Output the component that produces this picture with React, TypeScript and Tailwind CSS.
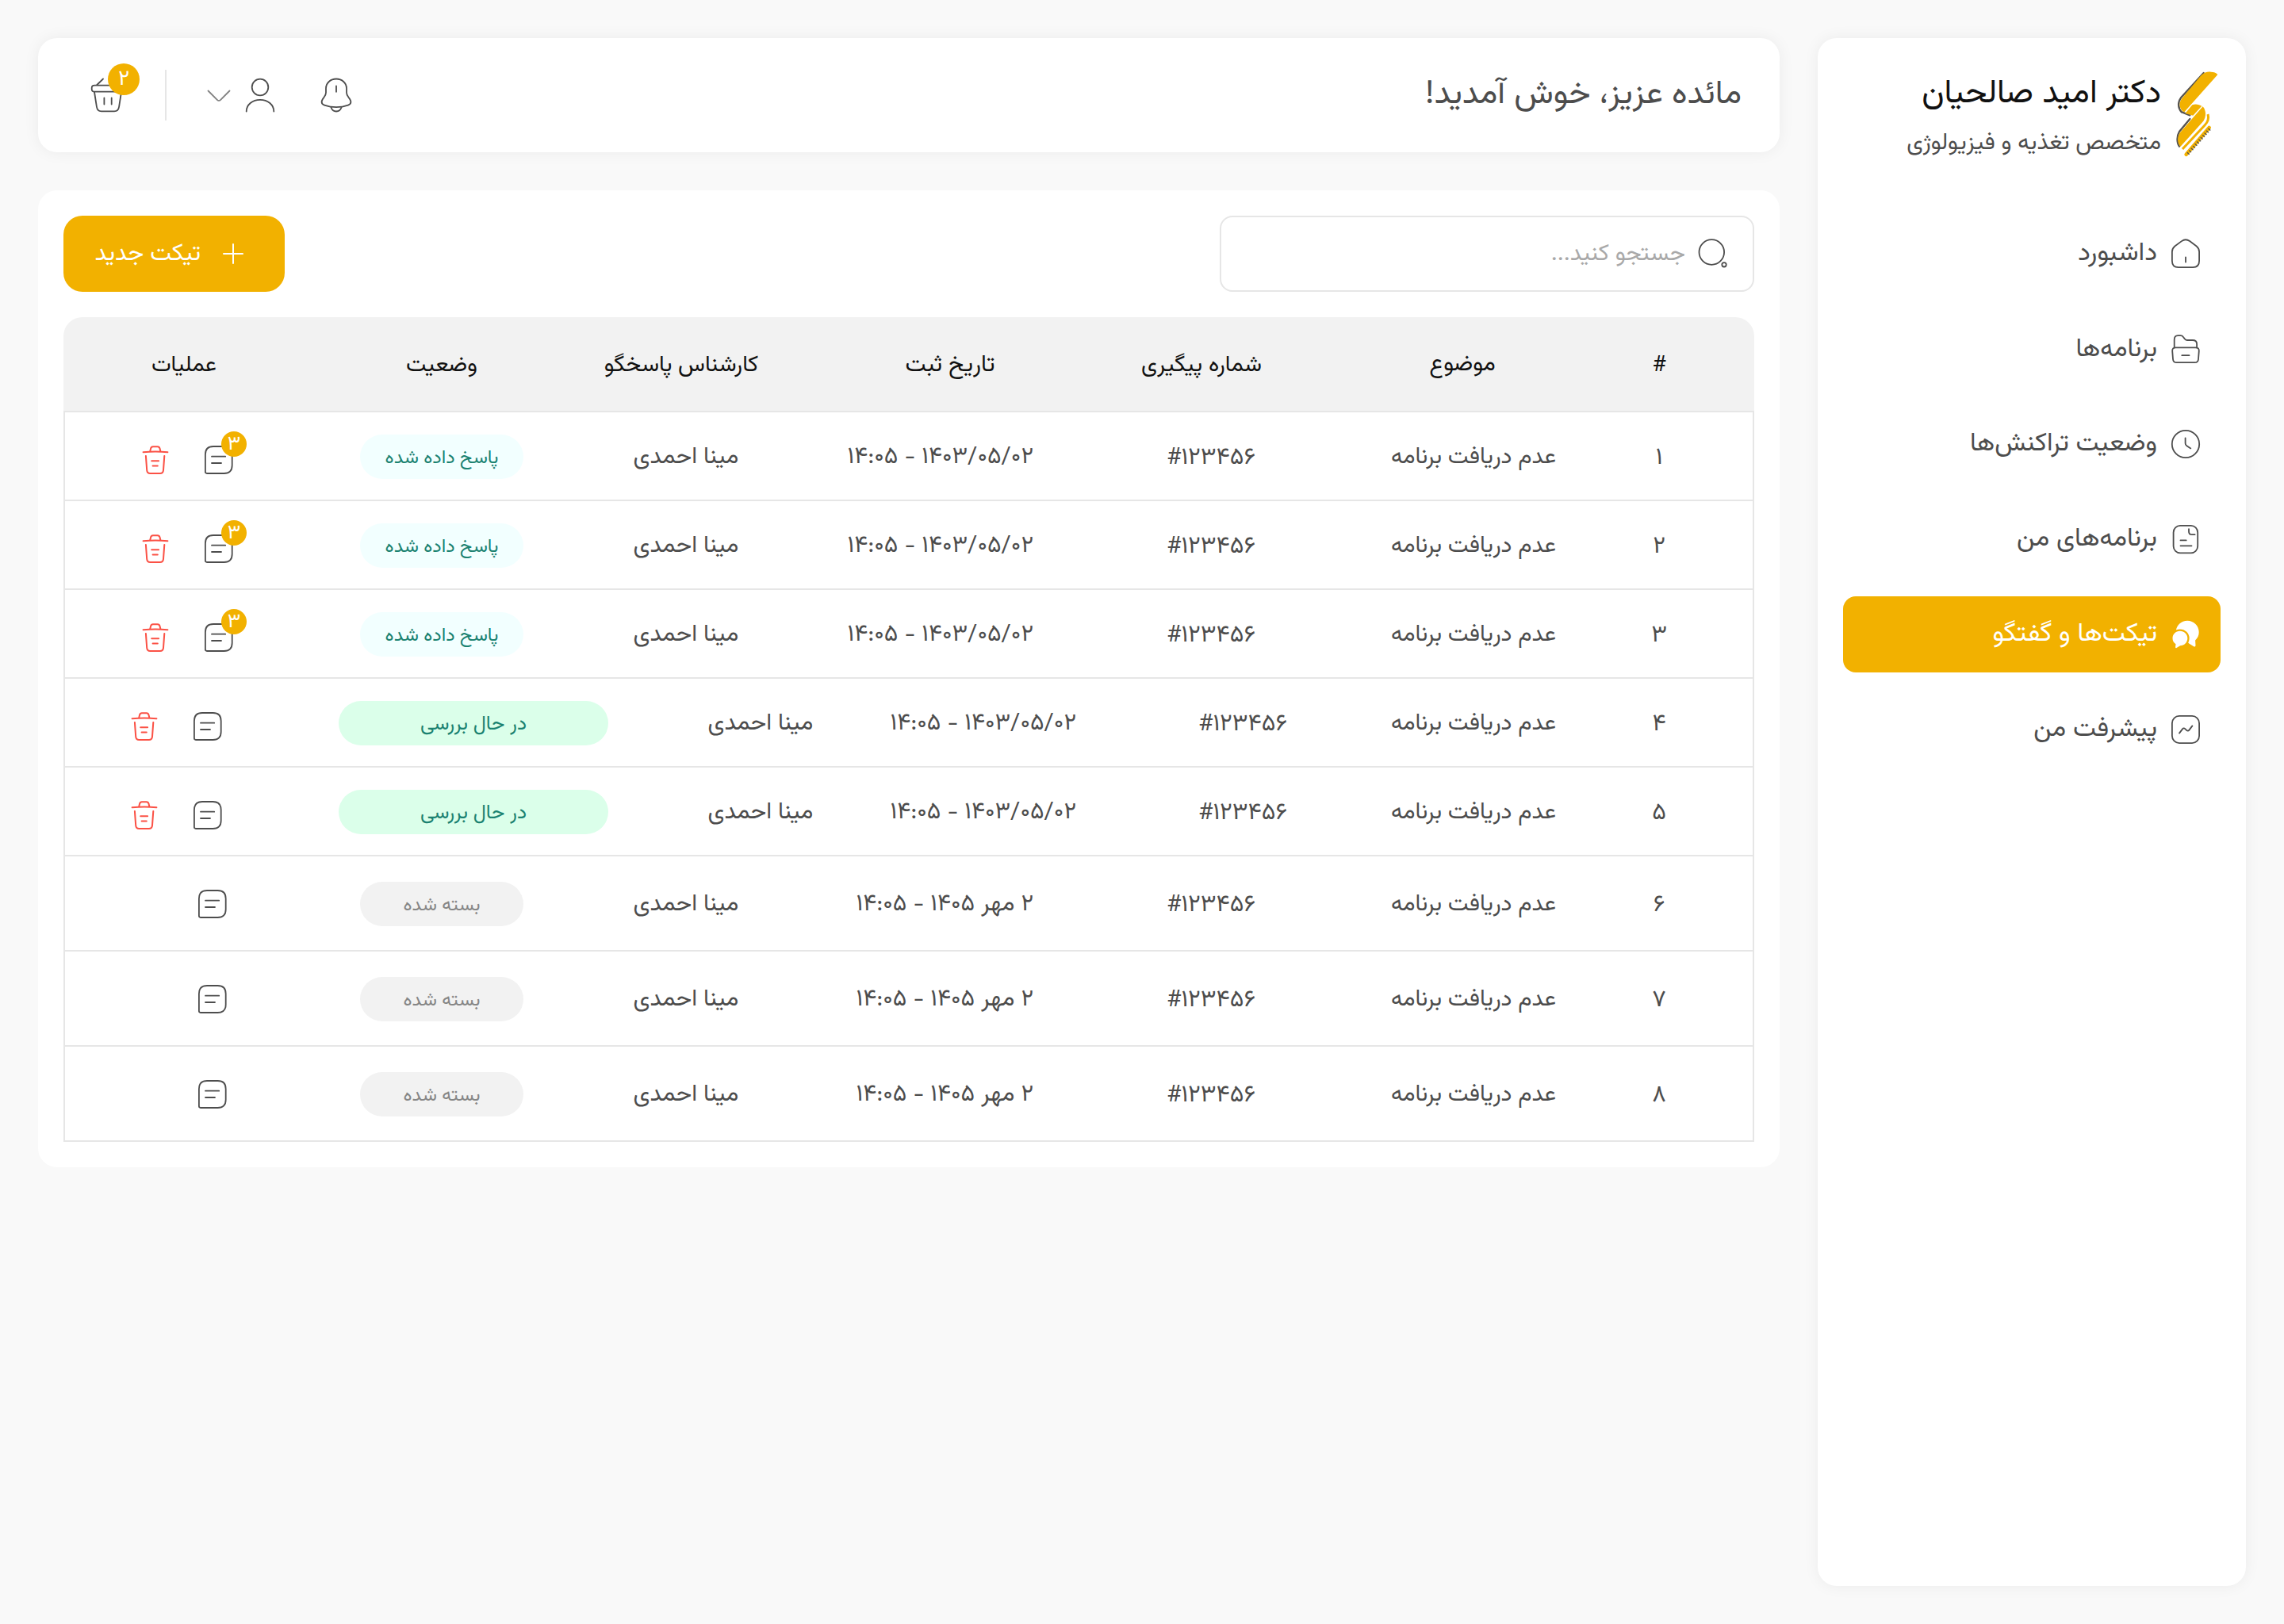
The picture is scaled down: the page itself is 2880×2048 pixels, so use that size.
import type { ReactNode } from "react";
import clsx from "clsx";

const Icon = ({ children, className }: { children: ReactNode; className?: string }) => (
    <svg
        viewBox="0 0 48 48"
        fill="none"
        stroke="currentColor"
        strokeWidth="1.8"
        strokeLinecap="round"
        strokeLinejoin="round"
        className={clsx("w-12 h-12 shrink-0", className)}
    >
        {children}
    </svg>
);

const HomeIcon = () => (
    <Icon>
        <path d="M6.9 21.5c0-3.6 1.2-5.2 3.4-7l8.6-6.4c3.6-2.6 6.6-2.6 10.2 0l8.6 6.4c2.2 1.8 3.4 3.4 3.4 7V33c0 5.6-2.6 8.1-8 8.1H14.9c-5.4 0-8-2.5-8-8.1z" />
        <path d="M24 28.5v6" />
    </Icon>
);

const FolderIcon = () => (
    <Icon>
        <path d="M9.7 22.3V12.5c0-3.6 1.6-5.3 4.6-5.3h3.2c1.7 0 2.6.5 3.5 1.8l1.7 2.3c.8 1.2 1.5 1.7 3 1.7h7c3.6 0 5.4 1.6 5.4 5v4.3" />
        <path d="M11.5 22.3h25c3 0 4.5 1.5 4.3 4.3l-.8 10.4c-.2 2.8-1.5 4.2-4.5 4.2h-23c-3 0-4.3-1.4-4.500-4.200l-.8-10.400c-.2-2.800 1.300-4.300 4.300-4.300z" />
        <path d="M19.3 32.2h9.2" />
    </Icon>
);

const ClockIcon = () => (
    <Icon>
        <circle cx="24" cy="24" r="17.2" />
        <path d="M23.6 16.3v6.7c0 1.600.4 2.400 1.800 3.300l4.900 3.100" />
    </Icon>
);

const DocumentIcon = () => (
    <Icon>
        <rect x="8.6" y="6.9" width="30.6" height="34.4" rx="8.5" />
        <path d="M28 11.2v3c0 2.8 1.2 4 3.8 4h3.8" />
        <path d="M17.5 25.4h7.2M17.5 32.3h14" />
    </Icon>
);

const ChatIcon = () => (
    <Icon>
        <path
            d="M26.2 6.8c8 0 14.5 6.4 14.5 14.4 0 4-1.7 7.6-4.6 10.3l.4 6.5c0 1.3-1.2 1.9-2.3 1.2l-6-3.7L11.7 20c.6-7.4 6.9-13.2 14.5-13.2z"
            fill="currentColor"
            stroke="none"
        />
        <path
            d="M16.8 19.8c5.4 0 9.5 4.1 9.5 9.2s-4.1 9.3-9.2 9.3l-4.6 2.7c-.8.5-1.6 0-1.4-.9l.4-3.8c-2.5-1.7-4-4.3-4-7.3 0-5.1 4-9.2 9.3-9.2z"
            fill="currentColor"
            stroke="#f2b100"
            strokeWidth="4.6"
            paintOrder="stroke"
        />
    </Icon>
);

const ProgressIcon = () => (
    <Icon>
        <rect x="6.9" y="6.9" width="34.2" height="34.2" rx="9" />
        <path d="m16 28.6 4-5.2c1-1.2 2.2-1.2 3.3-.2l1.8 1.7c1.1 1 2.3 1 3.3-.3l4-5.2" />
    </Icon>
);

const BellIcon = () => (
    <Icon>
        <path d="M24 3.5c-7.3 0-13 5.4-13 12v5.2c0 2.5-1 4.2-2.5 6.1-1.5 1.9-2.9 3.7-2.9 5.8 0 2.1 1.2 3.3 3.4 4 9.4 3.2 20.6 3.2 30 0 2.2-.7 3.4-1.9 3.4-4 0-2.1-1.4-3.9-2.9-5.8-1.5-1.9-2.5-3.6-2.5-6.1v-5.2c0-6.6-5.7-12-13-12z" />
        <path d="M17.5 39.5c1 3 3.5 5 6.5 5s5.5-2 6.5-5M24 12.5v7.3" />
    </Icon>
);

const UserIcon = () => (
    <Icon>
        <circle cx="24" cy="14" r="10.3" />
        <path d="M6.7 44.5c0-8.3 7.5-14.7 17.3-14.7s17.3 6.4 17.3 14.7" />
    </Icon>
);

const ChevronIcon = () => (
    <Icon className="text-[#828282]">
        <path d="m10.5 18.5 11.3 11.3c1.5 1.5 2.9 1.5 4.4 0l11.3-11.3" />
    </Icon>
);

const BasketIcon = () => (
    <Icon>
        <path d="M18 3.5 10.3 11M30 3.5 37.7 11" />
        <path d="M7.3 11.7h33.4c2.4 0 3.6 1.2 3.6 3.2v1.6c0 2-1.2 3.2-3.6 3.2H7.3c-2.4 0-3.6-1.2-3.6-3.2v-1.6c0-2 1.2-3.2 3.6-3.2z" />
        <path d="m7 20 2.9 18.7c.6 3.7 2 5.7 6 5.7h16.2c4 0 5.4-2 6-5.7L41 20" />
        <path d="M19.4 27.5v8M28.7 27.5v8" />
    </Icon>
);

const SearchIcon = () => (
    <Icon>
        <circle cx="22.3" cy="22" r="15.8" />
        <circle cx="38" cy="37.8" r="2.7" />
    </Icon>
);

const PlusIcon = () => (
    <Icon className="stroke-2">
        <path d="M24 12v24M12 24h24" />
    </Icon>
);

const NoteIcon = () => (
    <Icon>
        <path d="M17 7h13.5c6.6 0 10.2 3.7 10.2 10.2v13.6c0 6.5-3.6 10.2-10.2 10.2H8.9c-1.3 0-2-.7-2-2V17.2C6.9 10.7 10.5 7 17 7z" />
        <path d="M15 19.7h17.2M15 28h12" />
    </Icon>
);

const TrashIcon = () => (
    <Icon className="stroke-2 text-[#fb5145]">
        <path d="M8.6 14.2c10-1 20.8-1 30.8 0" />
        <path d="m17.3 13 .8-3.4c.4-1.6 1-2.4 2.8-2.4h5.8c1.8 0 2.4.8 2.8 2.4l.8 3.4" />
        <path d="m11.9 18.9 1.3 18c.2 2.9 1.2 4.2 4.2 4.2h12.4c3 0 4-1.3 4.2-4.2l1.3-18" />
        <path d="M19.2 25.2h8.9M20.6 31.4h6.2" />
    </Icon>
);

const Logo = () => (
    <svg viewBox="126 54 168 336" className="w-14 h-28 shrink-0">
        <g fill="none" stroke="#55534f" strokeWidth="7" strokeLinecap="round">
            <path d="M236 66 150 160C138 176 138 198 152 214" />
            <path d="M154 214 184 226" />
            <path d="M184 240 144 288C134 304 134 330 144 344" />
        </g>
        <g fill="#f2b100">
            <path d="M289 72 163 214C144 206 140 180 154 162L226 76C240 62 252 60 264 62 276 62 284 66 289 72z" />
            <path d="M193 187C206 181 220 186 229 191L196 227 166 219z" />
            <path d="M233 193C246 208 246 232 235 248L148 345C136 332 135 308 147 291z" />
        </g>
        <path d="M252 222C257 240 250 254 240 264L156 354" fill="none" stroke="#f2b100" strokeWidth="9" />
        <path d="M257 273 170 374" fill="none" stroke="#f2b100" strokeWidth="14" strokeLinecap="round" />
        <path d="M259 278 172 377" fill="none" stroke="#55534f" strokeWidth="11" strokeDasharray="4 7" />
    </svg>
);

const menu = [
    { label: "داشبورد", size: "text-[33px]", icon: <HomeIcon /> },
    { label: "برنامه‌ها", size: "text-[32.4px]", icon: <FolderIcon /> },
    { label: "وضعیت تراکنش‌ها", size: "text-[32.6px]", icon: <ClockIcon /> },
    { label: "برنامه‌های من", size: "text-[32.8px]", icon: <DocumentIcon /> },
    { label: "تیکت‌ها و گفتگو", size: "text-[32.8px]", icon: <ChatIcon />, active: true },
    { label: "پیشرفت من", size: "text-[32.6px]", icon: <ProgressIcon /> },
];

const Sidebar = () => (
    <aside className="w-[540px] h-[1952px] shrink-0 rounded-3xl bg-white shadow-[0_0_20px_rgba(0,0,0,0.06)] px-8 pt-10">
        <div className="flex gap-[17px] ps-[2px] h-28">
            <Logo />
            <div className="flex flex-col whitespace-nowrap">
                <h1 className="text-[41.8px] leading-[62px] text-[#111]">دکتر امید صالحیان</h1>
                <p className="text-[29.1px] leading-[62px]">متخصص تغذیه و فیزیولوژی</p>
            </div>
        </div>
        <nav className="flex flex-col gap-6 mt-[72px]">
            {menu.map((item) => (
                <a
                    key={item.label}
                    className={clsx(
                        "flex items-center gap-3 h-24 px-5 rounded-2xl whitespace-nowrap",
                        item.active && "bg-[#f2b100] text-white"
                    )}
                >
                    {item.icon}
                    <span className={clsx("pt-[2px]", item.size)}>{item.label}</span>
                </a>
            ))}
        </nav>
    </aside>
);

const Header = () => (
    <header className="flex items-center h-36 rounded-3xl bg-white shadow-[0_0_20px_rgba(0,0,0,0.06)] ps-12 pe-16">
        <h2 className="text-[41.9px] leading-[60px] whitespace-nowrap">مائده عزیز، خوش آمدید!</h2>
        <div className="flex items-center ms-auto">
            <BellIcon />
            <div className="flex gap-1 ms-12">
                <UserIcon />
                <ChevronIcon />
            </div>
            <div className="w-[2px] h-16 bg-[#e6e6e6] ms-[42px]" />
            <div className="relative ms-12">
                <BasketIcon />
                <span className="absolute -top-4 left-6 flex justify-center size-10 rounded-full bg-[#f2b100] text-white text-[27px] leading-[41px]">
                    ۲
                </span>
            </div>
        </div>
    </header>
);

const headings = [
    { label: "#", cell: "ms-[100px] w-10 text-[28px]" },
    { label: "موضوع", cell: "ms-[186px] w-[84px] text-[29px]" },
    { label: "شماره پیگیری", cell: "ms-[211px] w-[152px] text-[28.5px]" },
    { label: "تاریخ ثبت", cell: "ms-[184px] w-[114px] text-[29.4px]" },
    { label: "کارشناس پاسخگو", cell: "ms-[184px] w-[196px] text-[28.6px]" },
    { label: "وضعیت", cell: "ms-[159px] w-[90px] text-[28.6px]" },
    { label: "عملیات", cell: "ms-[239px] w-[82px] text-[28.2px]" },
];

// The status decides how wide the pill is and how the cells beside it are spaced
const statuses = {
    answered: {
        label: "پاسخ داده شده",
        row: "h-28",
        number: "ms-[172px]",
        date: "ms-[169px]",
        expert: "ms-[136px]",
        pill: "ms-[138px] w-[206px] bg-[#f2ffff] text-[#1b8271] text-[23.7px]",
        actions: "ms-[154px] pt-2",
    },
    pending: {
        label: "در حال بررسی",
        row: "h-28",
        number: "ms-[132px]",
        date: "ms-[155px]",
        expert: "ms-[96px]",
        pill: "ms-[125px] w-[340px] bg-[#dbffea] text-[#1b8271] text-[25.3px]",
        actions: "ms-[141px] pt-2",
    },
    closed: {
        label: "بسته شده",
        row: "h-[120px]",
        number: "ms-[172px]",
        date: "ms-[169px]",
        expert: "ms-[136px]",
        pill: "ms-[138px] w-[206px] bg-[#f2f2f2] text-[#868686] text-[23.7px]",
        actions: "ms-[162px]",
    },
};

type Ticket = { id: string; date: string; status: keyof typeof statuses; unread?: string };

const tickets: Ticket[] = [
    { id: "۱", date: "۱۴۰۳/۰۵/۰۲ - ۱۴:۰۵", status: "answered", unread: "۳" },
    { id: "۲", date: "۱۴۰۳/۰۵/۰۲ - ۱۴:۰۵", status: "answered", unread: "۳" },
    { id: "۳", date: "۱۴۰۳/۰۵/۰۲ - ۱۴:۰۵", status: "answered", unread: "۳" },
    { id: "۴", date: "۱۴۰۳/۰۵/۰۲ - ۱۴:۰۵", status: "pending" },
    { id: "۵", date: "۱۴۰۳/۰۵/۰۲ - ۱۴:۰۵", status: "pending" },
    { id: "۶", date: "۲ مهر ۱۴۰۵ - ۱۴:۰۵", status: "closed" },
    { id: "۷", date: "۲ مهر ۱۴۰۵ - ۱۴:۰۵", status: "closed" },
    { id: "۸", date: "۲ مهر ۱۴۰۵ - ۱۴:۰۵", status: "closed" },
];

const TicketRow = ({ ticket }: { ticket: Ticket }) => {
    const status = statuses[ticket.status];
    return (
        <div className={clsx("flex items-center pt-[2px] border-x-2 border-b-2 border-[#e6e6e6] whitespace-nowrap", status.row)}>
            <div className="flex justify-center ms-[98px] w-10 pt-[3px] text-[30px]">{ticket.id}</div>
            <div className="flex justify-center ms-[110px] w-[208px] pt-[3px] text-[29px]">عدم دریافت برنامه</div>
            <div className={clsx("flex justify-center w-[110px] pt-[3px] text-[30px]", status.number)}>#۱۲۳۴۵۶</div>
            <div className={clsx("w-[235px] pt-[3px] text-[29.8px]", status.date)}>{ticket.date}</div>
            <div className={clsx("flex justify-center w-[134px] pt-[3px] text-[29.7px]", status.expert)}>مینا احمدی</div>
            <div className={clsx("flex items-center justify-center h-14 pt-[5px] rounded-full", status.pill)}>{status.label}</div>
            <div className={clsx("flex gap-8", status.actions)}>
                <div className="relative">
                    <NoteIcon />
                    {ticket.unread && (
                        <span className="absolute -top-3 left-[27px] flex justify-center size-8 rounded-full bg-[#f2b100] text-white text-[25px] leading-[33px]">
                            {ticket.unread}
                        </span>
                    )}
                </div>
                {ticket.status !== "closed" && <TrashIcon />}
            </div>
        </div>
    );
};

const Tickets = () => (
    <section className="flex flex-col gap-8 p-8 rounded-3xl bg-white">
        <div className="flex justify-between">
            <div className="flex items-center gap-[11px] w-[674px] h-24 ps-[26px] border-2 border-[#e6e6e6] rounded-2xl">
                <SearchIcon />
                <span className="pt-[2px] text-[29.4px] text-[#a9a9a9]">جستجو کنید...</span>
            </div>
            <button className="flex items-center gap-[17px] w-[279px] h-24 ps-[41px] rounded-3xl bg-[#f2b100] text-white text-[30.2px] whitespace-nowrap">
                <PlusIcon />
                <span className="pt-[2px]">تیکت جدید</span>
            </button>
        </div>
        <div>
            <div className="flex items-center h-[120px] pt-1 rounded-t-3xl bg-[#f2f2f2] border-b-2 border-[#e6e6e6] text-[#111] whitespace-nowrap">
                {headings.map((heading) => (
                    <div key={heading.label} className={clsx("flex justify-center", heading.cell)}>
                        {heading.label}
                    </div>
                ))}
            </div>
            {tickets.map((ticket) => (
                <TicketRow key={ticket.id} ticket={ticket} />
            ))}
        </div>
    </section>
);

export default function App() {
    return (
        <div
            dir="rtl"
            className="flex items-start gap-12 w-[2880px] h-[2048px] p-12 bg-[#f9f9f9] text-[#4d4d4d] font-['Vazirmatn','Noto_Sans_Arabic','DejaVu_Sans',sans-serif]"
        >
            <Sidebar />
            <main className="flex flex-col flex-1 gap-12">
                <Header />
                <Tickets />
            </main>
        </div>
    );
}
